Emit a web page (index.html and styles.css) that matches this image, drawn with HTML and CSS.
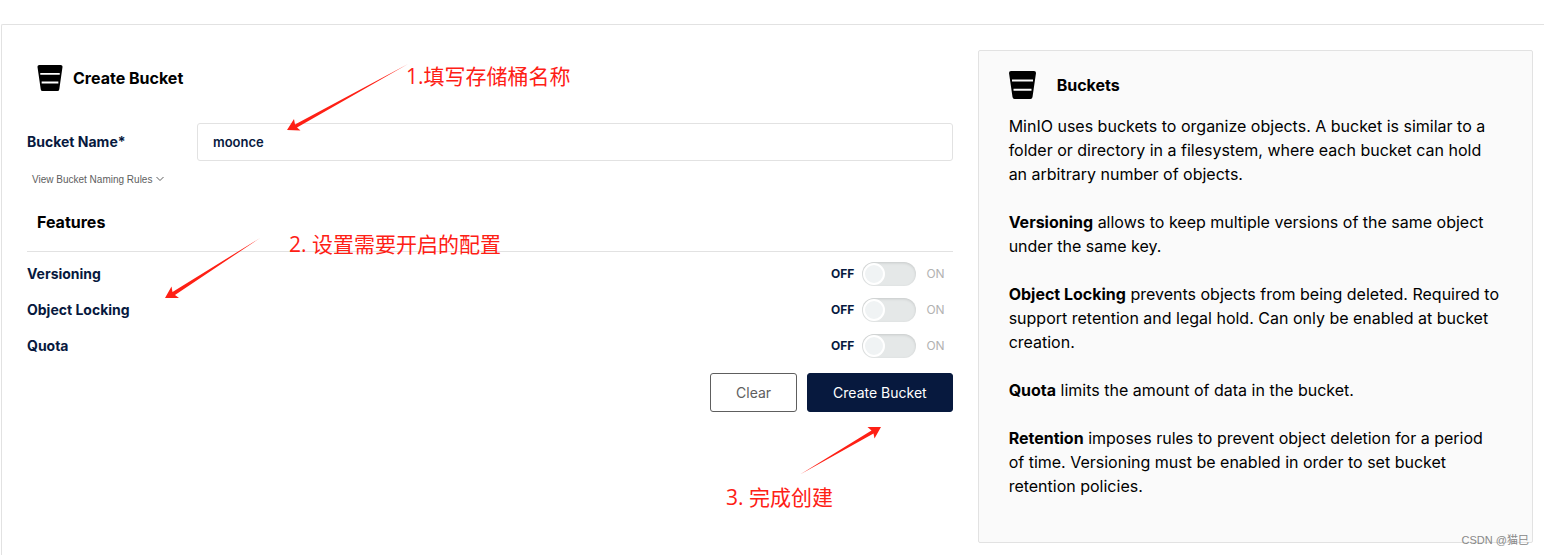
FILE: index.html
```html
<!doctype html>
<html lang="en">
    <head>
        <meta charset="utf-8">
        <title>Create Bucket</title>
        <link rel="stylesheet" href="styles.css">
    </head>
    <body>
        <svg class="defs" width="0" height="0">
            <symbol id="bucket" viewBox="0 0 27 28">
                <path d="M2 0H25Q27 0 27 2L23.5 26Q23.200 28 21.500 28H5.500Q3.800 28 3.500 26L0 2Q0 0 2 0ZM3 8.500V10.500H24V8.500ZM4.500 17.800V19.800H22.500V17.800Z" fill-rule="evenodd"/>
            </symbol>
        </svg>
        <main class="page">
            <form class="bucket-form">
                <h1 class="form-title">
                    <svg class="title-icon"><use href="#bucket"/></svg>
                    Create Bucket
                </h1>
                <div class="name-row">
                    <label for="bucket-name">Bucket Name*</label>
                    <input type="text" id="bucket-name" value="moonce">
                </div>
                <button type="button" class="rules">
                    View Bucket Naming Rules
                    <svg width="8" height="6" viewBox="0 0 8 6"><path d="M.5 1L4 4.500L7.500 1" fill="none" stroke="currentColor"/></svg>
                </button>
                <h2 class="features">Features</h2>
                <div class="feature">
                    <label for="versioning">Versioning</label>
                    <span class="off">OFF</span>
                    <input type="checkbox" class="switch" id="versioning">
                    <span class="on">ON</span>
                </div>
                <div class="feature">
                    <label for="locking">Object Locking</label>
                    <span class="off">OFF</span>
                    <input type="checkbox" class="switch" id="locking">
                    <span class="on">ON</span>
                </div>
                <div class="feature">
                    <label for="quota">Quota</label>
                    <span class="off">OFF</span>
                    <input type="checkbox" class="switch" id="quota">
                    <span class="on">ON</span>
                </div>
                <div class="actions">
                    <button type="reset" class="btn">Clear</button>
                    <button type="button" class="btn primary">Create Bucket</button>
                </div>
            </form>
            <aside class="help">
                <h2 class="help-title">
                    <svg class="help-icon"><use href="#bucket"/></svg>
                    Buckets
                </h2>
                <p>MinIO uses buckets to organize objects. A bucket is similar to a folder or directory in a filesystem, where each bucket can hold an arbitrary number of objects.</p>
                <p><b>Versioning</b> allows to keep multiple versions of the same object under the same key.</p>
                <p><b>Object Locking</b> prevents objects from being deleted. Required to support retention and legal hold. Can only be enabled at bucket creation.</p>
                <p><b>Quota</b> limits the amount of data in the bucket.</p>
                <p><b>Retention</b> imposes rules to prevent object deletion for a period of time. Versioning must be enabled in order to set bucket retention policies.</p>
            </aside>
        </main>

        <!-- step notes drawn over the form -->
        <svg class="arrows" width="960" height="555">
            <path d="M408 64L295 124.500L294 119L287 130L300.500 130.500L297 127.500Z"/>
            <path d="M260 238L172.500 292L171.500 286.500L165 298L179 298L175 295Z"/>
            <path d="M800 474.500L871.500 430.500L867.500 427L881 427L874.500 438.500L873.500 433.500Z"/>
        </svg>
        <div class="note note-name">1.填写存储桶名称</div>
        <div class="note note-features">2. 设置需要开启的配置</div>
        <div class="note note-create">3. 完成创建</div>
        <div class="watermark">CSDN @猫巳</div>
    </body>
</html>
```
FILE: styles.css
```css
*,
*::before {
    box-sizing: border-box;
    margin: 0;
}
body {
    position: relative;
    height: 100vh;
    padding: 24px 0 0 1px;
    overflow: hidden;
    background: #fff;
    color: #000;
    font-family: Inter, sans-serif;
    font-size: 16px;
    line-height: 24px;
}
.defs {
    position: absolute;
}
.page {
    display: grid;
    grid-template-columns: 5fr 3fr;
    gap: 25px;
    align-items: start;
    min-height: 100%;
    padding: 25px 11px 12px 25px;
    border: 1px solid #e2e2e2;
    border-right: 0;
    border-bottom: 0;
    border-top-left-radius: 2px;
}
h1,
h2 {
    font-size: 16px;
    font-weight: 700;
}
button {
    font-family: inherit;
    cursor: pointer;
}

/* form */
.bucket-form {
    color: #07193e;
    font-size: 14px;
}
.form-title {
    display: flex;
    align-items: center;
    gap: 10px;
    height: 56px;
    padding-left: 10px;
    color: #000;
}
.title-icon {
    width: 26px;
    height: 26px;
}
.name-row {
    display: flex;
    align-items: center;
    margin-top: 17px;
}
.name-row label {
    width: 170px;
    font-weight: 700;
}
.name-row input {
    flex: 1;
    height: 38px;
    padding: 0 15px;
    border: 1px solid #e2e2e2;
    border-radius: 3px;
    color: #07193e;
    font-family: Inter, sans-serif;
    font-size: 13px;
    font-weight: 600;
}
.rules {
    display: flex;
    align-items: center;
    gap: 4px;
    height: 16px;
    margin-top: 10px;
    padding: 0 5px;
    border: 0;
    background: none;
    color: #5e5e5e;
    font-family: "Liberation Sans", sans-serif;
    font-size: 10px;
}
.features {
    height: 65px;
    padding: 23px 10px 0;
    border-bottom: 1px solid #e2e2e2;
    color: #000;
}
.features + .feature {
    margin-top: 4px;
}
.feature {
    display: flex;
    align-items: center;
    height: 36px;
    padding-right: 8px;
    font-size: 12px;
}
.feature label {
    flex: 1;
    font-size: 14px;
    font-weight: 700;
}
.off {
    font-weight: 700;
}
.on {
    color: #b2b2b2;
}
.switch {
    appearance: none;
    width: 54px;
    height: 24px;
    margin: 0 10px 0 8px;
    padding: 1px;
    border-radius: 12px;
    background: #e5e8e8;
    box-shadow: inset 0 1px 3px #0002;
}
.switch::before {
    content: "";
    display: block;
    width: 22px;
    height: 22px;
    border: 2px solid #fff;
    border-radius: 50%;
    background: #f0f3f4;
}
.switch:checked::before {
    margin-left: auto;
}
.actions {
    display: flex;
    justify-content: flex-end;
    gap: 10px;
    margin-top: 9px;
}
.btn {
    height: 39px;
    padding: 0 25px;
    border: 1px solid #5e5e5e;
    border-radius: 3px;
    background: #fff;
    color: #5e5e5e;
    font-size: 14px;
}
.primary {
    border-color: #07193e;
    background: #07193e;
    color: #fff;
}

/* help box */
.help {
    padding: 20px 30px 44px;
    border: 1px solid #e2e2e2;
    border-radius: 2px;
    background: #fafafa;
}
.help-title {
    display: flex;
    align-items: center;
    gap: 21px;
    margin-bottom: 15px;
}
.help-icon {
    width: 27px;
    height: 28px;
}
.help p + p {
    margin-top: 24px;
}
.help b {
    font-weight: 700;
}

/* notes */
.arrows {
    position: absolute;
    top: 0;
    left: 0;
    fill: #fe2015;
    pointer-events: none;
}
.note {
    position: absolute;
    color: #fe2015;
    font-family: "Open Sans", "Noto Sans CJK SC", sans-serif;
    font-size: 21px;
    white-space: nowrap;
}
.note-name {
    top: 64px;
    left: 406px;
}
.note-features {
    top: 232px;
    left: 289px;
}
.note-create {
    top: 485px;
    left: 726px;
}
.watermark {
    position: absolute;
    right: 15px;
    bottom: 3px;
    color: #888;
    font-family: "Liberation Sans", "Noto Sans CJK SC", sans-serif;
    font-size: 11px;
}
```
